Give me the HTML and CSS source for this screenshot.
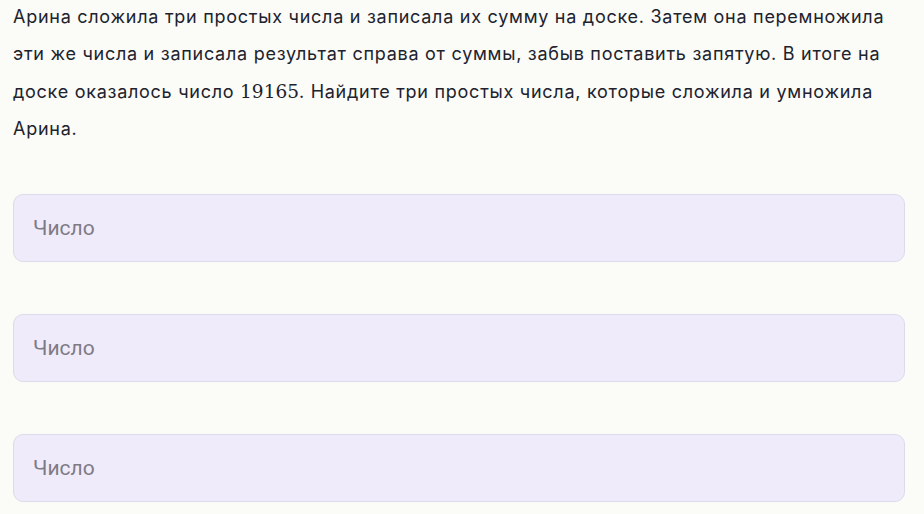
FILE: index.html
```html
<!DOCTYPE html>
<html lang="ru">
<head>
    <meta charset="UTF-8">
    <meta name="viewport" content="width=device-width, initial-scale=1.0">
    <title>Задача</title>
    <link rel="stylesheet" href="styles.css">
</head>
<body>
    <div class="task">
        <p class="task-text">Арина сложила три простых числа и записала их сумму на доске. Затем она перемножила эти же числа и записала результат справа от суммы, забыв поставить запятую. В итоге на доске оказалось число <span class="math">19165</span>. Найдите три простых числа, которые сложила и умножила Арина.</p>
        <div class="answers">
            <input type="text" class="answer" placeholder="Число">
            <input type="text" class="answer" placeholder="Число">
            <input type="text" class="answer" placeholder="Число">
        </div>
    </div>
</body>
</html>
```

FILE: styles.css
```css
*{
    margin: 0;
    padding: 0;
    box-sizing: border-box;
}
body{
    background-color: #fbfbf7;
    font-family: 'Inter', 'Roboto', sans-serif;
    color: #20222e;
}
.task{
    width: 892px;
    margin-left: 13px;
}
.task-text{
    font-size: 18px;
    letter-spacing: 0.73px;
    line-height: 37.4px;
    margin-top: -2px;
}
.math{
    font-family: 'DejaVu Serif', serif;
    font-size: 18.5px;
    letter-spacing: 0;
}
.answers{
    margin-top: 46px;
    display: flex;
    flex-direction: column;
    gap: 52px;
}
.answer{
    height: 68px;
    width: 100%;
    border: 1px solid #dddbe9;
    border-radius: 10px;
    background-color: #f0ebfb;
    padding: 0 19px;
    font-family: 'Roboto', sans-serif;
    font-size: 21px;
    color: #20222e;
    outline: none;
}
.answer::placeholder{
    color: #7d7b84;
}
```
